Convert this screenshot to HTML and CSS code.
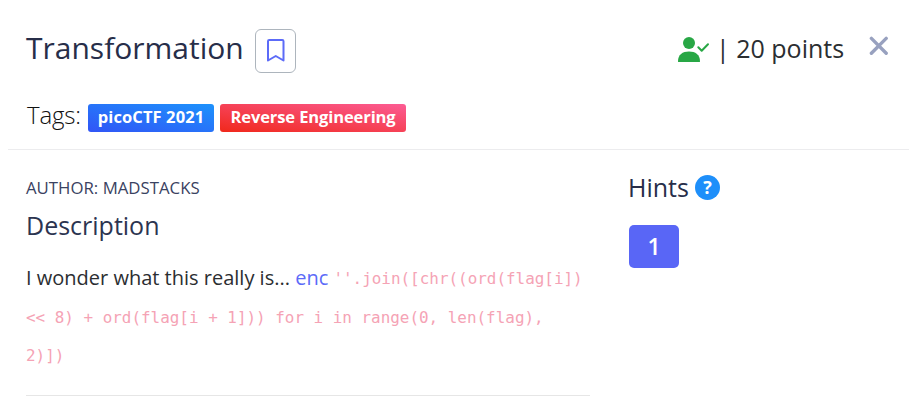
FILE: index.html
```html
<!DOCTYPE html>
<html lang="en">
<head>
<meta charset="utf-8">
<title>Transformation</title>
<link rel="stylesheet" href="styles.css">
</head>
<body>
<header class="header">
  <div class="title-row">
    <h1 class="title">Transformation</h1>
    <button class="bookmark" aria-label="Bookmark">
      <svg width="20" height="26" viewBox="0 0 20 26" fill="none" stroke="#5c6bf8" stroke-width="2" stroke-linejoin="round"><path d="M2 3.2Q2 2 3.2 2H16.3Q17.5 2 17.5 3.2V22.5L9.75 18L2 22.5Z"/></svg>
    </button>
    <div class="points">
      <svg width="32" height="27" viewBox="0 0 32 27" fill="#28a745"><circle cx="11" cy="7" r="6"/><path d="M0 25.5C0 18.5 4.5 15.5 11 15.5S22 18.5 22 25.5Q22 26 21.3 26H.7Q0 26 0 25.5Z"/><path d="M20.3 11.3L23.7 14.7L30 8.3" fill="none" stroke="#28a745" stroke-width="2" stroke-linecap="round" stroke-linejoin="round"/></svg>
      <span class="points-text">| 20 points</span>
    </div>
    <button class="close" aria-label="Close">
      <svg width="20" height="20" viewBox="0 0 20 20" stroke="#98a1bf" stroke-width="3.4" stroke-linecap="round"><path d="M2.4 2.4L17.2 17.2M17.2 2.4L2.4 17.2"/></svg>
    </button>
  </div>
  <div class="tags">
    <span class="tags-label">Tags:</span>
    <span class="tag tag-blue"><span class="tag-event">picoCTF 2021</span></span>
    <span class="tag tag-red"><span class="tag-topic">Reverse Engineering</span></span>
  </div>
</header>
<main class="content">
  <section class="details">
    <div class="author"><span class="author-text">AUTHOR: MADSTACKS</span></div>
    <h2 class="subtitle"><span class="description">Description</span></h2>
    <p class="body"><span class="question">I wonder what this really is... <a class="link">enc</a></span> <code>''.join([chr((ord(flag[i])<br>&lt;&lt; 8) + ord(flag[i + 1])) for i in range(0, len(flag),<br>2)])</code></p>
  </section>
  <aside class="hints">
    <h2 class="hints-title"><span class="hints-text">Hints</span><span class="help">?</span></h2>
    <button class="hint">1</button>
  </aside>
</main>
</body>
</html>
```
FILE: styles.css
```css
* { box-sizing: border-box; }
body { margin: 0; height: 414px; overflow: hidden; background: #fff; color: #2b2e31; font-family: "Open Sans", sans-serif; font-weight: 400; }
h1, h2, p { margin: 0; font-weight: 400; }
button { padding: 0; border: 0; background: none; font-family: inherit; }
svg { display: block; }
.header { height: 150px; margin-left: 8px; padding: 29px 20px 0 18px; border-bottom: 1px solid #ececee; }
.title-row { display: flex; align-items: flex-start; height: 44px; }
.title { font-size: 30px; line-height: 38px; color: #272e49; white-space: nowrap; width: 229px; }
.bookmark { display: flex; justify-content: center; width: 41px; height: 44px; padding-top: 8px; border: 1px solid #adb5bd; border-radius: 6px; }
.points { display: flex; margin-left: auto; padding-top: 7px; }
.points-text { width: 127px; margin-left: 6px; font-size: 25px; line-height: 25px; white-space: nowrap; }
.close { margin: 7px 0 0 26px; }
.tags { display: flex; align-items: center; height: 28px; margin-top: 31px; margin-left: 1px; }
.tags-label { width: 61px; font-size: 24px; font-weight: 300; line-height: 28px; letter-spacing: -0.2px; color: #111; margin-top: -6px; }
.tag { height: 28px; border-radius: 3px; color: #fff; font-size: 16.5px; font-weight: 700; line-height: 26px; text-align: center; white-space: nowrap; }
.tag-blue { width: 126px; letter-spacing: 0.1px; background: linear-gradient(to top right, #3155f6, #1d92fc); }
.tag-red { width: 186px; margin-left: 6px; letter-spacing: -0.1px; background: linear-gradient(to top right, #f0281b, #fc5c94); }
.content { display: flex; padding-left: 26px; }
.details { width: 564px; height: 246px; border-bottom: 1px solid #e6e6e6; padding-top: 26px; }
.author { font-size: 16.8px; line-height: 24px; color: #3a4261; white-space: nowrap; }
.subtitle { margin-top: 10px; font-size: 25px; line-height: 31px; color: #2c3450; }
.body { margin-top: 18px; font-size: 20px; line-height: 38.5px; white-space: nowrap; }
.link { color: #5c6bf8; }
code { position: relative; top: -1px; font-family: "DejaVu Sans Mono", monospace; font-size: 15.93px; line-height: 1; color: #f5a3b5; }
.hints { padding: 23px 0 0 38px; }
.hints-title { display: flex; align-items: center; height: 30px; font-size: 25px; color: #272e49; }
.hints-text { width: 67px; line-height: 30px; margin-top: -2px; }
.help { width: 25px; height: 25px; margin-top: -1px; border-radius: 50%; background: #1e8ffa; color: #fff; font-size: 18px; font-weight: 700; line-height: 25px; text-align: center; }
.hint { display: block; width: 50px; height: 43px; margin: 22px 0 0 1px; border-radius: 5px; background: #5966f6; color: #fff; font-size: 23px; font-weight: 600; line-height: 43px; }
```
